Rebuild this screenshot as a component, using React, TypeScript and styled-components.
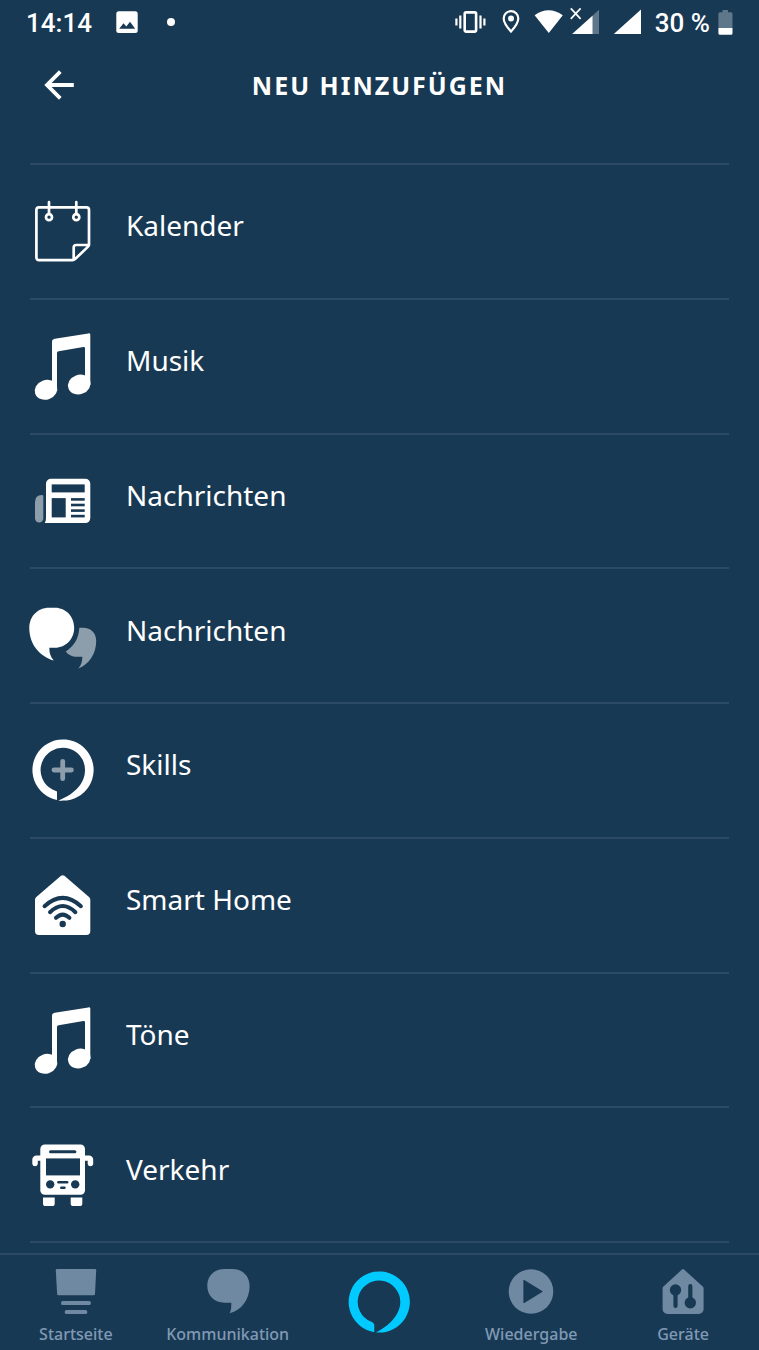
import React from "react";
import styled, { createGlobalStyle } from "styled-components";

const color = {
  background: "#183953",
  line: "#2c4966",
  white: "#ffffff",
  faded: "#8c9dab",
  dimmed: "#5f778b",
  navIcon: "#6f89a2",
  navText: "#8099b6",
  accent: "#00caff",
};

const GlobalStyle = createGlobalStyle`
  * { box-sizing: border-box; }
  body {
    margin: 0;
    background: ${color.background};
    color: ${color.white};
    font-family: "Noto Sans", "Open Sans", sans-serif;
  }
`;

const Page = styled.div`
  display: flex;
  flex-direction: column;
  min-height: 100vh;
  background: ${color.background};
`;

const StatusBar = styled.div`
  display: flex;
  align-items: center;
  justify-content: space-between;
  height: 46px;
  padding: 0 26px;
  font-family: Roboto, sans-serif;
  font-size: 26px;
  font-weight: 500;
  line-height: 30px;
  white-space: nowrap;
`;

const StatusGroup = styled.div<{ $gap: number }>`
  display: flex;
  align-items: center;
  gap: ${(p) => p.$gap}px;
`;

const StatusSvg = styled.svg`
  display: block;
  flex: none;
  height: 28px;
  overflow: visible;
`;

const Header = styled.header`
  display: grid;
  grid-template-columns: 1fr auto 1fr;
  align-items: center;
  height: 78px;
  padding: 0 44px;
  margin-bottom: 39px;
`;

const BackButton = styled.button`
  display: block;
  justify-self: start;
  padding: 0;
  border: 0;
  background: none;
  color: inherit;
  cursor: pointer;

  svg { display: block; }
`;

const Title = styled.h1`
  margin: 0;
  font-size: 25px;
  font-weight: 700;
  line-height: 32px;
  letter-spacing: 2px;
  text-transform: uppercase;
  white-space: nowrap;
`;

const Main = styled.main`
  display: flex;
  flex: 1;
  flex-direction: column;
  padding: 0 30px 10px;
`;

const List = styled.ul`
  display: flex;
  flex: 1;
  flex-direction: column;
  margin: 0;
  padding: 0;
  list-style: none;
  border-top: 2px solid ${color.line};
`;

const ListItem = styled.li`
  display: flex;
  flex: 1 0 0;
  min-height: 104px;
  border-bottom: 2px solid ${color.line};
`;

const RowButton = styled.button`
  display: flex;
  flex: 1;
  align-items: center;
  gap: 30px;
  padding: 0;
  border: 0;
  background: none;
  color: inherit;
  font: inherit;
  text-align: left;
  cursor: pointer;
`;

const RowSvg = styled.svg`
  display: block;
  flex: none;
  width: 66px;
  height: 68px;
  overflow: visible;
`;

const RowLabel = styled.span`
  padding-bottom: 12px;
  font-size: 28px;
  line-height: 36px;
`;

const NavBar = styled.nav`
  display: grid;
  grid-template-columns: repeat(5, 1fr);
  align-items: center;
  height: 97px;
  border-top: 2px solid ${color.line};
`;

const NavLink = styled.a`
  display: flex;
  flex-direction: column;
  align-items: center;
  gap: 9px;
  padding-top: 8px;
  color: ${color.navText};
  font-size: 16px;
  font-weight: 500;
  line-height: 20px;
  text-decoration: none;
`;

const HomeLink = styled.a`
  display: flex;
  justify-content: center;
  padding-bottom: 2px;
  color: ${color.accent};
`;

const NavSvg = styled.svg`
  display: block;
  width: 46px;
  height: 46px;
  color: ${color.navIcon};
`;

const CalendarIcon = () => (
  <RowSvg viewBox="0 0 66 68" fill="none" stroke="currentColor" strokeWidth="2.7" aria-hidden>
    <path d="M59 48V13a2.6 2.6 0 0 0-2.6-2.6H9A2.6 2.6 0 0 0 6.4 13v47.6A2.6 2.6 0 0 0 9 63.2h33.5c1.2 0 2-.5 2.8-1.3l12.5-12c.8-.8 1.2-1.2 1.2-1.9ZM43.7 62.5V50.5A2.5 2.5 0 0 1 46.2 48H58.5" />
    <circle cx="19" cy="20.2" r="3" fill={color.background} />
    <circle cx="46.3" cy="20.2" r="3" fill={color.background} />
    <path d="M19 5.2V17M46.3 5.2V17" strokeLinecap="round" />
  </RowSvg>
);

const MusicIcon = () => (
  <RowSvg viewBox="0 0 66 68" fill="currentColor" aria-hidden>
    <path d="M22 10c0-2 .9-2.9 2.8-3.3L58.3 1.4c1.3-.2 2 .3 2 1.5V53H55V16.5c0-1.2-.6-1.7-1.7-1.5L28.7 19.2c-1.2.2-1.7.9-1.7 2V58h-5Z" />
    <ellipse cx="49.3" cy="52.5" rx="11.5" ry="9.7" transform="rotate(-20 49.3 52.5)" />
    <ellipse cx="16" cy="57.8" rx="11.5" ry="9.7" transform="rotate(-20 16 57.8)" />
  </RowSvg>
);

const NewspaperIcon = () => (
  <RowSvg viewBox="0 0 66 68" aria-hidden>
    <path d="M12 28.1q1.3 0 1.3 1.3v22a4.2 4.7 0 0 1-8.3 0V35.5q0-7.4 7-7.4Z" fill={color.faded} />
    <path d="M21 11.8h34.3a5 5 0 0 1 5 5v34.3a5 5 0 0 1-5 5H14.7q1.3-1.8 1.3-5V16.8a5 5 0 0 1 5-5Z" fill="currentColor" />
    <g fill={color.background}>
      <rect x="21.7" y="17.4" width="33" height="8" />
      <rect x="21.7" y="31.1" width="14" height="19.3" />
      <rect x="41" y="31.1" width="13.7" height="2.6" />
      <rect x="41" y="36.7" width="13.7" height="2.6" />
      <rect x="41" y="42.3" width="13.7" height="2.6" />
      <rect x="41" y="47.8" width="13.7" height="2.6" />
    </g>
  </RowSvg>
);

const MessagesIcon = () => (
  <RowSvg viewBox="0 0 66 68" aria-hidden>
    <path d="M-.7 26C-.7 14 8 5.7 19 5.7H25C36 5.7 44.2 14.5 44.2 25.7S36 45.7 25 45.7H19.3C19.3 51 20.5 55 23.8 58.6C9 54-.7 42-.7 26Z" fill="currentColor" />
    <path d="M49.3 25.7H53C61 25.7 66.2 31 66.2 39C66.2 52 59 62.5 48.3 66.4C51.5 63 52.3 59 52.3 54.7H47C42 54.7 38 52.5 35.7 49.4C43.5 44.5 48.8 37 49.3 25.7Z" fill={color.faded} />
  </RowSvg>
);

const SkillsIcon = () => (
  <RowSvg viewBox="0 0 66 68" aria-hidden>
    <path d="M27 64A30.6 30.6 0 1 1 33 64.6Q30.5 64.7 28.3 64.4C42 59.5 55 49 55 34A22.2 22.2 0 1 0 22.5 53.6L27 55.6Z" fill="currentColor" />
    <path d="M32.7 25.3V42.7M24 34H41.4" stroke={color.faded} strokeWidth="4.8" strokeLinecap="round" />
  </RowSvg>
);

const SmartHomeIcon = () => (
  <RowSvg viewBox="0 0 66 68" aria-hidden>
    <path d="M31 4.8q1.7-1.2 3.4 0L59 26q1.3 1.2 1.3 3V60a4 4 0 0 1-4 4H9a4 4 0 0 1-4-4V29q0-1.8 1.3-3Z" fill="currentColor" />
    <g fill="none" stroke={color.background} strokeWidth="4" strokeLinecap="round">
      <path d="M14.5 35.2Q32.7 18.5 50.9 35.2" />
      <path d="M20 41.2Q32.7 28.8 45.4 41.2" />
      <path d="M26 46.8Q32.7 40.5 39.4 46.8" />
    </g>
    <circle cx="32.7" cy="53" r="3.2" fill={color.background} />
  </RowSvg>
);

const BusIcon = () => (
  <RowSvg viewBox="0 0 66 68" aria-hidden>
    <g fill="currentColor">
      <rect x="10.3" y="3.4" width="44.7" height="50.3" rx="4.5" />
      <path d="M11 14.4H6.5a4.2 4.2 0 0 0-4.2 4.2V23a2.8 2.8 0 0 0 5.5 0V19.8H11ZM54.5 14.4H59a4.2 4.2 0 0 1 4.2 4.2V23a2.8 2.8 0 0 1-5.5 0V19.8H54.5Z" />
      <path d="M13 56.4h11.7v6a2.6 2.6 0 0 1-2.6 2.6H15.6A2.6 2.6 0 0 1 13 62.4ZM40.7 56.4h11.6v6a2.6 2.6 0 0 1-2.6 2.6H43.3a2.6 2.6 0 0 1-2.6-2.6Z" />
    </g>
    <g fill={color.background}>
      <rect x="19" y="9.3" width="27.4" height="3" rx="1.5" />
      <rect x="16" y="17.4" width="34" height="17" />
      <circle cx="20.2" cy="43.4" r="4.2" />
      <circle cx="45.2" cy="43.4" r="4.2" />
      <rect x="27.2" y="40" width="11.2" height="2.4" rx="1.2" />
      <rect x="30" y="45.6" width="5.7" height="2.4" rx="1.2" />
    </g>
  </RowSvg>
);

const StartIcon = () => (
  <NavSvg viewBox="0 0 46 46" fill="currentColor" aria-hidden>
    <path d="M4 0H42q1.2 0 1.2 1.2L42 25q-.1 1.3-1.4 1.3H5.5q-1.3 0-1.4-1.3L2.8 1.2Q2.8 0 4 0Z" />
    <rect x="8.1" y="32" width="29.7" height="4" rx="1.5" />
    <rect x="11.8" y="41" width="22.4" height="4" rx="1.5" />
  </NavSvg>
);

const ChatIcon = () => (
  <NavSvg viewBox="0 0 46 46" fill="currentColor" aria-hidden>
    <path d="M19.5 0H27.5C38 0 44.6 7.5 44.6 17C44.6 30 37 41 24.6 44.3C26.3 41 26.3 38 26.3 33.7H19.5C9.5 33.7 2.3 27 2.3 16.8S9.5 0 19.5 0Z" />
  </NavSvg>
);

const AlexaIcon = () => (
  <RowSvg viewBox="0 0 66 68" fill="currentColor" aria-hidden>
    <path d="M28.3 64.2A30.6 30.6 0 1 1 33 64.6Q31.5 64.7 30 64.2C42 59 54.3 47 54.3 34A21.3 21.3 0 1 0 24.8 53.6C27 54.5 28.2 55.5 28.3 57.5Z" />
  </RowSvg>
);

const PlayIcon = () => (
  <NavSvg viewBox="0 0 46 46" aria-hidden>
    <circle cx="23" cy="22.5" r="22.3" fill="currentColor" />
    <path d="M15.4 11.6q0-1 .9-.5L34.2 21.9q.9.6 0 1.2L16.3 33.9q-.9.5-.9-.5Z" fill={color.background} />
  </NavSvg>
);

const DevicesIcon = () => (
  <NavSvg viewBox="0 0 46 46" aria-hidden>
    <path d="M22 .5q1-.8 2 0L43 17.7q.6.6.6 1.5V40a5 5 0 0 1-5 5h-31a5 5 0 0 1-5-5V19.2q0-.9.6-1.5Z" fill="currentColor" />
    <circle cx="15.5" cy="21" r="5.7" fill={color.background} />
    <circle cx="30.3" cy="33.7" r="5.7" fill={color.background} />
    <path d="M15.5 21V37M30.3 17.2V33" stroke={color.background} strokeWidth="4.2" strokeLinecap="round" />
  </NavSvg>
);

const entries = [
  { id: "calendar", label: "Kalender", Icon: CalendarIcon },
  { id: "music", label: "Musik", Icon: MusicIcon },
  { id: "news", label: "Nachrichten", Icon: NewspaperIcon },
  { id: "messages", label: "Nachrichten", Icon: MessagesIcon },
  { id: "skills", label: "Skills", Icon: SkillsIcon },
  { id: "smarthome", label: "Smart Home", Icon: SmartHomeIcon },
  { id: "sounds", label: "Töne", Icon: MusicIcon },
  { id: "traffic", label: "Verkehr", Icon: BusIcon },
];

const Status = () => (
  <StatusBar>
    <StatusGroup $gap={24}>
      <span>14:14</span>
      <StatusSvg width="22" viewBox="0 0 22 28" aria-hidden>
        <rect x=".3" y="2.3" width="21.4" height="21.7" rx="2.5" fill="currentColor" />
        <path d="M3.2 19.8 7.5 14.2 10.3 17.5 14 12.8 19.2 19.8Z" fill={color.background} />
      </StatusSvg>
      <StatusSvg width="18" viewBox="0 0 18 28" aria-hidden>
        <circle cx="9" cy="13" r="4" fill="currentColor" />
      </StatusSvg>
    </StatusGroup>
    <StatusGroup $gap={14}>
      <StatusSvg width="33" viewBox="0 0 33 28" fill="none" stroke="currentColor" aria-hidden>
        <rect x="9.7" y="3.4" width="11.4" height="19.2" rx="1.5" strokeWidth="2.6" />
        <path d="M1.4 9.5V16.5M5.3 6.5V19.5M25.5 6.5V19.5M29.4 9.5V16.5" strokeWidth="2.2" />
      </StatusSvg>
      <StatusSvg width="18" viewBox="0 0 18 28" aria-hidden>
        <path d="M9 2.2a7.3 7.3 0 0 0-7.3 7.3C1.7 14.5 9 22.5 9 22.5S16.3 14.5 16.3 9.5A7.3 7.3 0 0 0 9 2.2Z" fill="none" stroke="currentColor" strokeWidth="2.2" />
        <circle cx="9" cy="9.5" r="3" fill="currentColor" />
      </StatusSvg>
      <StatusGroup $gap={8}>
        <StatusSvg width="29" viewBox="0 0 29 28" aria-hidden>
          <path d="M.6 6.3Q14.5-3.6 28.8 6.3L14.8 24Z" fill="currentColor" />
        </StatusSvg>
        <StatusSvg width="28" viewBox="0 0 28 28" aria-hidden>
          <path d="M28 .8V25H1.2Z" fill={color.dimmed} />
          <path d="M21.500 6.700V25H1.200Z" fill="currentColor" />
          <path d="M-.2-.6 9.6 9.800M9.600-.6-.2 9.800" stroke="currentColor" strokeWidth="1.7" />
        </StatusSvg>
      </StatusGroup>
      <StatusSvg width="28" viewBox="0 0 28 28" aria-hidden>
        <path d="M28 .5V25H.8Z" fill="currentColor" />
      </StatusSvg>
      <StatusGroup $gap={8}>
        <span>30 %</span>
        <StatusSvg width="15" viewBox="0 0 15 28" aria-hidden>
          <path d="M4.5 1H10V3.2H13q1.5 0 1.5 1.5V19H.4V4.700q0-1.500 1.500-1.500H4.500Z" fill={color.dimmed} />
          <path d="M.4 19H14.500V24.200q0 1.500-1.500 1.500H1.900q-1.500 0-1.500-1.500Z" fill="currentColor" />
        </StatusSvg>
      </StatusGroup>
    </StatusGroup>
  </StatusBar>
);

export default function App() {
  return (
    <Page>
      <GlobalStyle />
      <Status />
      <Header>
        <BackButton type="button" aria-label="Zurück">
          <svg width="30" height="30" viewBox="0 0 30 30" fill="none" stroke="currentColor" strokeWidth="3.8" aria-hidden>
            <path d="M29.800 15H3M16.300 1.700 3 15 16.300 28.300" />
          </svg>
        </BackButton>
        <Title>Neu hinzufügen</Title>
      </Header>
      <Main>
        <List>
          {entries.map(({ id, label, Icon }) => (
            <ListItem key={id}>
              <RowButton type="button">
                <Icon />
                <RowLabel>{label}</RowLabel>
              </RowButton>
            </ListItem>
          ))}
        </List>
      </Main>
      <NavBar>
        <NavLink href="#start">
          <StartIcon />
          Startseite
        </NavLink>
        <NavLink href="#kommunikation">
          <ChatIcon />
          Kommunikation
        </NavLink>
        <HomeLink href="#alexa" aria-label="Alexa">
          <AlexaIcon />
        </HomeLink>
        <NavLink href="#wiedergabe">
          <PlayIcon />
          Wiedergabe
        </NavLink>
        <NavLink href="#geraete">
          <DevicesIcon />
          Geräte
        </NavLink>
      </NavBar>
    </Page>
  );
}
